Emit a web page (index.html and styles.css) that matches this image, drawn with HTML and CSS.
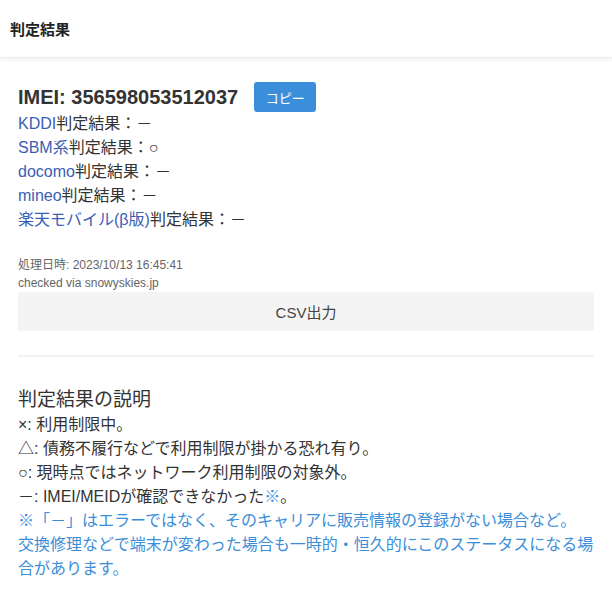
FILE: index.html
```html
<!DOCTYPE html>
<html lang="ja">
<head>
<meta charset="utf-8">
<link rel="stylesheet" href="styles.css">
</head>
<body>
<header class="bar"><h1 class="bar-title">判定結果</h1></header>
<main class="content">
  <div class="imei-row">
    <h2 class="imei">IMEI: 356598053512037</h2>
    <button class="copy">コピー</button>
  </div>
  <ul class="results">
    <li><a class="link">KDDI</a>判定結果：－</li>
    <li><a class="link">SBM系</a>判定結果：○</li>
    <li><a class="link">docomo</a>判定結果：－</li>
    <li><a class="link">mineo</a>判定結果：－</li>
    <li><a class="link">楽天モバイル(β版)</a>判定結果：－</li>
  </ul>
  <div class="meta">
    <div>処理日時: 2023/10/13 16:45:41</div>
    <div>checked via snowyskies.jp</div>
  </div>
  <button class="csv">CSV出力</button>
  <hr class="sep">
  <h3 class="explain-title">判定結果の説明</h3>
  <ul class="explain">
    <li>×: 利用制限中。</li>
    <li>△: 債務不履行などで利用制限が掛かる恐れ有り。</li>
    <li>○: 現時点ではネットワーク利用制限の対象外。</li>
    <li>－: IMEI/MEIDが確認できなかった<span class="note-mark">※</span>。</li>
  </ul>
  <p class="note">※「－」はエラーではなく、そのキャリアに販売情報の登録がない場合など。<br>交換修理などで端末が変わった場合も一時的・恒久的にこのステータスになる場合があります。</p>
</main>
</body>
</html>
```
FILE: styles.css
```css
* { box-sizing: border-box; }
body {
  margin: 0;
  font-family: "Liberation Sans", Arial, "Noto Sans CJK JP", sans-serif;
  color: #333;
  background: #fff;
}
.bar {
  height: 58px;
  padding: 0 10px;
  display: flex;
  align-items: center;
  border-bottom: 1px solid #ececec;
  box-shadow: 0 2px 4px rgba(0,0,0,0.06);
}
.bar-title {
  margin: 0;
  font-size: 15px;
  font-weight: bold;
  color: #222;
}
.content {
  padding: 24px 18px 0 18px;
}
.imei-row {
  display: flex;
  align-items: center;
  gap: 16px;
  height: 30px;
}
.imei {
  margin: 0;
  font-size: 20px;
  font-weight: bold;
  color: #333;
}
.copy {
  width: 62px;
  height: 30px;
  border: none;
  border-radius: 3px;
  background: #3b8ed9;
  color: #fff;
  font-family: inherit;
  font-size: 13px;
  padding: 0;
}
.results {
  list-style: none;
  margin: 0;
  padding: 0;
  font-size: 16px;
  line-height: 24px;
}
.link { color: #3c5db5; }
.meta {
  margin-top: 24px;
  font-size: 12px;
  line-height: 18px;
  color: #666;
}
.csv {
  display: block;
  width: 100%;
  height: 39px;
  margin-top: 0;
  border: none;
  border-radius: 3px;
  background: #f4f4f4;
  color: #444;
  font-family: inherit;
  font-size: 15px;
}
.sep {
  margin: 24px 0 0 0;
  border: none;
  border-top: 2px solid #f2f2f2;
}
.explain-title {
  margin: 29px 0 0 0;
  font-size: 19px;
  font-weight: normal;
  line-height: 27px;
  color: #333;
}
.explain {
  list-style: none;
  margin: 0;
  padding: 0;
  font-size: 16px;
  line-height: 24px;
}
.note-mark { color: #3b8ed9; }
.note {
  margin: 0;
  font-size: 16px;
  line-height: 24px;
  color: #3b8ed9;
}
```
